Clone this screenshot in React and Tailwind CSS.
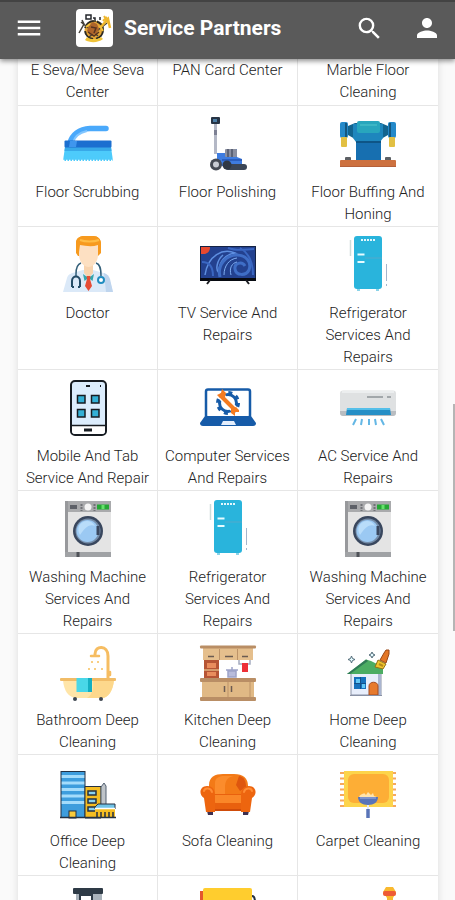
import React from 'react';
import { MdMenu, MdSearch, MdPerson } from 'react-icons/md';

const Icon = ({ children }) => (
    <svg viewBox="0 0 56 56" className="w-14 h-14 shrink-0 overflow-visible" fill="none" aria-hidden="true">
        {children}
    </svg>
);

const BrushIcon = () => (
    <Icon>
        <path d="M46 12.500H30C19 13 12 19 10 27" stroke="#4aa9fb" strokeWidth="5.500" strokeLinecap="round" />
        <path d="M27 15C18 17 14 22 13 27" stroke="#82c6ff" strokeWidth="2" />
        <path d="M5 31h46l2 14H3z" fill="#4dcbfb" />
        <path d="M5 31h46l.5 4h-47z" fill="#38a9e8" />
        <path d="M3 44.500h50" stroke="#fff" strokeWidth="1.500" strokeDasharray="1.500 1.500" />
        <rect x="4.500" y="24.500" width="47" height="7" rx="1" fill="#1c6fd0" />
        <path d="M10 25h7l-1 6h-7z" fill="#3f96ee" />
    </Icon>
);

const PolisherIcon = () => (
    <Icon>
        <path d="M15.500 7v31" stroke="#b4b8c6" strokeWidth="3" />
        <path d="M15.500 14v5" stroke="#7d8194" strokeWidth="3" />
        <rect x="11" y="1" width="9" height="7" rx="1" fill="#273445" />
        <rect x="13" y="3" width="4" height="3" fill="#4c7ea6" />
        <path d="M17 37h10v-4h10v8l5 2v7H17z" fill="#3e7ce0" />
        <rect x="25" y="33" width="12" height="8" rx="1" fill="#8a8fa0" />
        <path d="M28 33v8M32 33v8" stroke="#4e5668" strokeWidth="1.500" />
        <path d="M22 44h20" stroke="#2a5fc0" strokeWidth="2" />
        <rect x="25" y="48" width="22" height="6" rx="3" fill="#3b4656" />
        <circle cx="27" cy="49" r="4.500" fill="#2f3845" />
        <circle cx="16" cy="48.500" r="6" fill="#454a54" />
        <circle cx="16" cy="48.500" r="3" fill="#c9ccd4" />
    </Icon>
);

const BuffingIcon = () => (
    <Icon>
        <path d="M8 10l7-3h26l7 3v9l-7 4H15l-7-4z" fill="#12648f" />
        <rect x="0" y="6" width="8" height="16" rx="2" fill="#2489c9" />
        <rect x="48" y="6" width="8" height="16" rx="2" fill="#2489c9" />
        <path d="M6 7v14M50 7v14" stroke="#14577f" strokeWidth="2" />
        <rect x="1" y="21" width="6" height="10" rx="1" fill="#e2c043" />
        <rect x="49" y="21" width="6" height="10" rx="1" fill="#e2c043" />
        <rect x="16" y="24" width="25" height="20" fill="#176fb0" />
        <path d="M13 8h30v14l-3 4H16l-3-4z" fill="#1e86bd" />
        <rect x="17" y="5" width="23" height="12" rx="2" fill="#28a6bd" />
        <path d="M20 9h17" stroke="#51c6cc" strokeWidth="1" />
        <path d="M16 26h25" stroke="#0e5586" strokeWidth="2" />
        <rect x="5" y="41" width="6" height="4" rx="1" fill="#5c6065" />
        <rect x="45" y="41" width="6" height="4" rx="1" fill="#5c6065" />
        <rect x="0" y="44" width="56" height="7" rx="1" fill="#cd713f" />
        <path d="M0 50.500h56" stroke="#b5603a" strokeWidth="1" />
    </Icon>
);

const DoctorIcon = () => (
    <Icon>
        <path d="M3 55l4-14c1-4 5-5 9-6l7-2h10l7 2c4 1 8 2 9 6l4 14z" fill="#dbe9f8" />
        <path d="M44 36c3 1 5 3 6 6l3 13h-7z" fill="#bfd5ee" />
        <path d="M24 28h9v8l-4.500 5L24 36z" fill="#f8d3ae" />
        <path d="M16 16V6c0-5 4-7 8-7h9c5 0 8 3 8 8v9l-3 3H18z" fill="#f79a1e" />
        <path d="M19 7h19v11c0 7-5 12-9.500 12S19 25 19 18z" fill="#fde0c2" />
        <path d="M16 16V6c0-4 3-7 8-7h9c5 0 8 3 8 8v8l-3-1V8c-6 2-12 1-18 0l-1 7z" fill="#f79a1e" />
        <path d="M20 3c5 2 14 2 19 0" stroke="#ffbd45" strokeWidth="2" />
        <path d="M23 37l5.500 4-4 3zM34 37l-5.500 4 4 3z" fill="#35a6ad" />
        <path d="M26.500 39h4l-.5 3 2 7-3.500 5-3.500-5 2-7z" fill="#e64b35" />
        <path d="M21 26c-3 1-5 4-5 11v2M36 26c4 1 5 5 5 13" stroke="#335f79" strokeWidth="1.500" />
        <path d="M12 50V44c0-6 8-6 8 0v6M12 50h2M18 50h2" stroke="#234b66" strokeWidth="2" />
        <circle cx="41" cy="43" r="3" stroke="#218dc0" strokeWidth="2" fill="#fff" />
    </Icon>
);

const TvIcon = () => (
    <Icon>
        <rect x="0" y="9" width="56" height="35" fill="#142345" />
        <rect x="1" y="10" width="54" height="31" fill="#23418f" />
        <path d="M5 38c3-20 18-27 30-22-9 1-17 9-16 20-4-3-2-13 4-18" stroke="#5e8fe0" strokeWidth="1.500" />
        <path d="M20 40c-3-12 6-22 17-22 9 0 15 7 12 15-3 6-13 6-14-1-1-6 7-8 10-3" stroke="#3f6ec6" strokeWidth="3" />
        <path d="M28 11c8 3 17 2 26 1M2 25c8 0 11 6 11 14M40 11c9 5 13 14 13 27" stroke="#3a67c2" strokeWidth="2" />
        <path d="M24 38c0-9 5-16 13-17M31 38c-2-7 1-12 6-13" stroke="#7faef2" strokeWidth="1" />
        <path d="M1 10h9c0 4-2 6-5 7H1z" fill="#e8492f" />
        <path d="M0 42.500h56" stroke="#080b12" strokeWidth="3" />
        <path d="M10 43l-3 4M46 43l3 4" stroke="#1b1d22" strokeWidth="2" />
    </Icon>
);

const FridgeIcon = () => (
    <Icon>
        <path d="M17 51v3h3v-3zM36 51v3h3v-3z" fill="#8bd3e8" />
        <rect x="14" y="-1" width="28" height="53" rx="3" fill="#29b4dc" />
        <path d="M25 21h17" stroke="#55a9cb" strokeWidth="1" />
        <path d="M21 3h15" stroke="#e2f7fd" strokeWidth="2" strokeDasharray="2 1" />
        <path d="M17.500 17.500h7M17.500 25h7" stroke="#e6fbff" strokeWidth="2" />
        <path d="M10.500 3v16" stroke="#ccdbd8" strokeWidth="1.500" />
        <path d="M46.500 27v17M46.500 47v2" stroke="#a4b5cc" strokeWidth="1" />
    </Icon>
);

const MobileIcon = () => (
    <Icon>
        <rect x="11" y="1" width="35" height="54" rx="4" fill="#dcedfd" stroke="#171c22" strokeWidth="2" />
        <path d="M12 46h33v5c0 2-1 3-3 3H15c-2 0-3-1-3-3z" fill="#fff" />
        <path d="M11 45.500h35" stroke="#171c22" strokeWidth="1.500" />
        <path d="M26 6h4M40 6h1" stroke="#171c22" strokeWidth="2" />
        <g fill="#33b0d6" stroke="#171c22" strokeWidth="1.500">
            <rect x="17.500" y="15.500" width="7.500" height="7.500" />
            <rect x="31.500" y="15.500" width="7.500" height="7.500" />
            <rect x="17.500" y="29.500" width="7.500" height="7.500" />
            <rect x="31.500" y="29.500" width="7.500" height="7.500" />
        </g>
        <path d="M24 50h8" stroke="#171c22" strokeWidth="3" />
    </Icon>
);

const LaptopIcon = () => (
    <Icon>
        <rect x="6" y="9.500" width="44" height="28" rx="2" fill="#fff" stroke="#165ba8" strokeWidth="2.500" />
        <circle cx="28" cy="23" r="8.500" stroke="#165ba8" strokeWidth="3" />
        <circle cx="28" cy="23" r="10.500" stroke="#165ba8" strokeWidth="3" strokeDasharray="4 4.250" />
        <path d="M21 16l14 14" stroke="#fff" strokeWidth="7" />
        <path d="M21 16l14 14" stroke="#f47b20" strokeWidth="4" />
        <path d="M17 15l3 3 5-1 1-4-4-4-1 4zM39 30l-3-3-5 2v4l4 3v-4h4z" fill="#f47b20" />
        <path d="M5 36h46l5 7c0 2-1 3-3 3H3c-2 0-3-1-3-3z" fill="#165ba8" />
        <path d="M23 41h11l2 4H21z" fill="#e4eefc" />
    </Icon>
);

const AcIcon = () => (
    <Icon>
        <rect x="0" y="10.500" width="56" height="25" rx="3" fill="#dfe1e2" />
        <path d="M0 31h56v2c0 2-1 3-3 3H3c-2 0-3-1-3-3z" fill="#b9bdc1" />
        <path d="M2 12h52" stroke="#eceeef" strokeWidth="2" />
        <path d="M27 17h16M47 17h4" stroke="#8f9498" strokeWidth="1.500" />
        <path d="M7 28h43l1 7H6z" fill="#268fc6" />
        <path d="M7 29h43" stroke="#55bfe9" strokeWidth="2" />
        <path d="M16 39l-3 6M22 39l-1 6M29 39v6M35 39l1 6M41 39l3 6" stroke="#64b7e5" strokeWidth="2" />
    </Icon>
);

const WasherIcon = () => (
    <Icon>
        <rect x="5" y="0" width="46" height="56" rx="1" fill="#e4e4e4" />
        <rect x="5" y="0" width="46" height="11" fill="#a9aaac" />
        <path d="M6.500 0v56" stroke="#98999c" strokeWidth="3" />
        <rect x="10" y="4" width="7" height="4" fill="#5d6067" />
        <path d="M21.500 3v7M34.500 3v7" stroke="#707277" strokeWidth="2" strokeDasharray="2 1" />
        <circle cx="28" cy="6" r="3.500" fill="#f4f4f4" />
        <rect x="37" y="3.500" width="12" height="5" fill="#26a735" />
        <path d="M43 4v4" stroke="#65e26b" strokeWidth="3" />
        <circle cx="28" cy="30" r="15" fill="#39475e" />
        <circle cx="28" cy="30" r="12.500" fill="#758da9" />
        <circle cx="27.500" cy="30" r="11" fill="#9bc9f3" />
        <path d="M19 25c4-7 13-6 16 0-6-3-11 3-15 9-2-3-2-6-1-9" fill="#b9ddfa" />
        <path d="M36.500 25h3v9h-3z" fill="#39475e" />
        <rect x="5" y="51" width="46" height="5" fill="#a0a2a5" />
        <path d="M18 51v5" stroke="#4f5258" strokeWidth="3" />
    </Icon>
);

const BathIcon = () => (
    <Icon>
        <path d="M48 35V12c0-11-13-11-13-2v2" stroke="#f6bd62" strokeWidth="3" />
        <path d="M31 12h8M50 28v3" stroke="#f6bd62" strokeWidth="2.500" strokeLinecap="round" />
        <path d="M31 18h2M37 18h2M28 25h2M34 25h2M41 25h2" stroke="#f9cf83" strokeWidth="2" />
        <path d="M3 36h51c-1 11-6 18-12 18H16C8 53 4 47 3 36" fill="#ffe5a8" />
        <path d="M33 36h21c-1 11-6 18-12 18H27c6-4 7-10 6-18" fill="#fdd88c" />
        <rect x="0" y="34" width="56" height="3" rx="1" fill="#f1bc67" />
        <rect x="16.500" y="34" width="12" height="14" fill="#49d7e8" />
        <rect x="28" y="34" width="4" height="14" fill="#14afc2" />
        <circle cx="15" cy="55" r="2" fill="#3e4650" />
        <circle cx="41" cy="55" r="2" fill="#3e4650" />
    </Icon>
);

const KitchenIcon = () => (
    <Icon>
        <rect x="3" y="4" width="50" height="12" fill="#e5bf8d" />
        <rect x="0" y="1.500" width="56" height="3" rx="1" fill="#b98e65" />
        <path d="M19.500 5v11M37.500 5v11" stroke="#bd9368" strokeWidth="1" />
        <path d="M8 12.500h6M25 12.500h8M42 12.500h6" stroke="#6b5b52" strokeWidth="1.500" />
        <rect x="4" y="16" width="15" height="18" fill="#b65535" />
        <path d="M7 19h9v5H7zM7 28h9v4H7z" fill="#e98d5d" />
        <path d="M4 26h15" stroke="#e0b37f" strokeWidth="1.500" />
        <path d="M39 16v4h11v-4" stroke="#a5acc0" strokeWidth="1.500" />
        <rect x="42" y="19" width="6" height="9" fill="#ed3038" />
        <path d="M26 26h12M28 27h8v6h-8zM32 23v3" fill="#b8bcdb" stroke="#9da3c8" strokeWidth="1.500" />
        <rect x="2" y="36" width="52" height="18" fill="#e0b985" />
        <rect x="0" y="34" width="56" height="4" rx="1" fill="#b98e65" />
        <rect x="0" y="53" width="56" height="4" rx="1" fill="#b98e65" />
        <path d="M28 38v15M50 38v15" stroke="#bd9368" strokeWidth="1" />
        <path d="M24.500 42v6M31.500 42v6" stroke="#6b5b52" strokeWidth="1.500" />
    </Icon>
);

const HomeIcon = () => (
    <Icon>
        <path d="M11 28h30v23H11z" fill="#e8eefb" stroke="#8991a5" strokeWidth="1" />
        <path d="M38 29h3v22h-3z" fill="#aab5d0" />
        <path d="M26 15.500L7 30h36V23L31 17z" fill="#4cad63" />
        <path d="M26 15.500L7 30h3l18-13z" fill="#317b57" />
        <rect x="14" y="33" width="12" height="12" fill="#1671bc" />
        <path d="M16 35h4v4h-4zM22 40h3v4h-3z" fill="#62c7f5" />
        <path d="M20.500 33v12M14 39.500h12" stroke="#134f87" strokeWidth="1" />
        <path d="M29 51V42c0-5 9-5 9 0v9z" fill="#e77a2d" stroke="#a34c25" strokeWidth="1" />
        <path d="M10 51.500h32" stroke="#8991a5" strokeWidth="1" />
        <path d="M46 6h3v4l-3 9-6-3 4-7z" fill="#e37626" stroke="#994616" strokeWidth="1" />
        <path d="M38 16l8 4-3 5-8-2z" fill="#f1c42c" stroke="#937117" strokeWidth="1" />
        <path d="M39 20l4 2" stroke="#b68b18" strokeWidth="2" />
        <path d="M11.500 12l1 2.500 2.500 1-2.500 1-1 2.500-1-2.500-2.500-1 2.500-1zM32 8l1 2 2 1-2 1-1 2-1-2-2-1 2-1z" stroke="#526b78" strokeWidth="1" fill="#e5fbff" />
    </Icon>
);

const OfficeIcon = () => (
    <Icon>
        <rect x="1" y="7" width="24" height="46" fill="#3d9ddd" />
        <path d="M1 11.500h24M1 18h24M1 24.500h24M1 31h24M1 37.500h24" stroke="#a4dcfb" strokeWidth="3" />
        <rect x="1" y="6.500" width="24" height="46" stroke="#243142" strokeWidth="1" />
        <path d="M25 21.500h16V53H25z" fill="#f5bd22" stroke="#243142" strokeWidth="1" />
        <path d="M28 26h8v4h-8zM28 34h8v4h-8zM28 42h8v4h-8z" fill="#8bd2ee" stroke="#243142" strokeWidth="1.500" />
        <path d="M41 53V22l3-4 2 3v20" fill="#bfc4c9" stroke="#526071" strokeWidth="1" />
        <path d="M35 42l3-3h17v5H35z" fill="#71c4e7" stroke="#243142" strokeWidth="1" />
        <rect x="35" y="44" width="20" height="8.500" fill="#f5bd22" />
        <path d="M37 53v-6M41 53v-6M45 53v-6M49 53v-6M53 53v-6" stroke="#243142" strokeWidth="1.500" />
        <path d="M35 43.500h20" stroke="#fff" strokeWidth="1.500" />
        <rect x="9" y="46" width="7" height="7" fill="#f8cb3c" stroke="#243142" strokeWidth="1" />
        <path d="M0 52.500h56" stroke="#243142" strokeWidth="1.500" />
    </Icon>
);

const SofaIcon = () => (
    <Icon>
        <path d="M7 46h6v4H8zM43 46h6l-1 4h-5z" fill="#3d3050" />
        <path d="M9 30V20c0-8 6-11 14-11h11c9 0 14 4 14 12v9z" fill="#f37a17" />
        <path d="M15 29V18c0-5 4-7 9-7h10c-7 1-9 5-9 12v6z" fill="#fb8c2c" />
        <path d="M39 11c5 1 7 5 7 11l-6 4-4-6z" fill="#de560e" />
        <path d="M12 29h33v17H12z" fill="#e9610e" />
        <path d="M13 30h31c2 0 3 8-2 8H16c-4 0-5-8-3-8" fill="#fa8728" />
        <path d="M7 21c7 0 8 5 8 11v15H6l-2-14c-6-4-4-12 3-12M49 21c-7 0-8 5-8 11v15h9l2-14c6-4 4-12-3-12" fill="#ed650f" />
        <path d="M4 26c1-4 7-3 8 1M52 26c-1-4-7-3-8 1" stroke="#ff8d35" strokeWidth="2" strokeLinecap="round" />
        <path d="M15 45h26" stroke="#cf4c0a" strokeWidth="2" />
    </Icon>
);

const CarpetIcon = () => (
    <Icon>
        <path d="M2 7v35M54 7v35" stroke="#f6a75d" strokeWidth="4" strokeDasharray="2 3.500" />
        <rect x="4" y="6" width="49" height="36" fill="#fdd44b" />
        <rect x="8" y="9" width="41" height="29" rx="6" fill="#fdae36" />
        <path d="M19 32c2-4 4-2 5-4l2 2 2-3 3 3 2-2 1 3 3 1z" fill="#ffe3ac" />
        <path d="M18 32h20c0 5-4 8-10 8s-10-3-10-8" fill="#5974b8" />
        <path d="M20 33h16" stroke="#7e93cc" strokeWidth="2" />
        <path d="M28 40v4" stroke="#e6eaf7" strokeWidth="2" />
        <path d="M28 44v9" stroke="#5974b8" strokeWidth="3.500" />
    </Icon>
);

const MachineIcon = () => (
    <Icon>
        <rect x="13" y="2" width="30" height="6" rx="1" fill="#2e3a46" />
        <path d="M16 8h26v24H16z" fill="#a9b2bb" />
        <path d="M20 9h12v20H20z" fill="#fff" stroke="#2e3a46" strokeWidth="2" />
    </Icon>
);

const MattressIcon = () => (
    <Icon>
        <rect x="0" y="5" width="8" height="30" fill="#e4572e" />
        <rect x="3" y="2" width="49" height="32" rx="2" fill="#ffcd2e" />
        <path d="M52 10c2 0 3 2 3 6" stroke="#263140" strokeWidth="2" />
    </Icon>
);

const DusterIcon = () => (
    <Icon>
        <path d="M46 1h7l3 5-3 6v14h-6V12l-4-6z" fill="#f9b92f" />
        <rect x="43" y="5" width="13" height="5" rx="2" fill="#ee5b35" />
    </Icon>
);

const Logo = () => (
    <svg viewBox="0 0 37 38" className="w-[37px] h-[38px] shrink-0" fill="none" aria-label="Service Partners logo">
        <rect width="37" height="38" rx="4" fill="#fff" />
        <circle cx="18" cy="21" r="9.500" fill="#e4a536" />
        <circle cx="18" cy="21" r="9" stroke="#2c2923" strokeWidth="2" strokeDasharray="12 3" />
        <path d="M9 31c5 3 13 3 18-1l-2-2c-4 3-10 3-14 0z" fill="#f0c338" />
        <path d="M3 24l5-9-2-4M5 13l17 14M31 14l-18 14" stroke="#45413b" strokeWidth="1.500" />
        <path d="M24 19l8-9 2 9" stroke="#efb72d" strokeWidth="2.500" />
        <path d="M28 7l5 8M27 12l4-4" stroke="#efb72d" strokeWidth="2" />
        <path d="M10 6h5v4h-5zM17 9h2v4M24 8v3" stroke="#24272c" strokeWidth="1.500" />
        <path d="M13 16l4-3 4 2 2 5-3 5-6 1-3-4z" fill="#ad642b" />
        <path d="M15 18l5 1-2 5M12 23l6 4 5-4" stroke="#563220" strokeWidth="1.500" />
        <path d="M10 18l4-3M24 17l3 5" stroke="#f4c13b" strokeWidth="2" />
    </svg>
);

// first row is the tail of the cards already scrolled under the header
const scrolledServices = ['E Seva/Mee Seva Center', 'PAN Card Center', 'Marble Floor Cleaning'];

const services = [
    { name: 'Floor Scrubbing', icon: BrushIcon },
    { name: 'Floor Polishing', icon: PolisherIcon },
    { name: 'Floor Buffing And Honing', icon: BuffingIcon },
    { name: 'Doctor', icon: DoctorIcon },
    { name: 'TV Service And Repairs', icon: TvIcon },
    { name: 'Refrigerator Services And Repairs', icon: FridgeIcon },
    { name: 'Mobile And Tab Service And Repair', icon: MobileIcon },
    { name: 'Computer Services And Repairs', icon: LaptopIcon },
    { name: 'AC Service And Repairs', icon: AcIcon },
    { name: 'Washing Machine Services And Repairs', icon: WasherIcon },
    { name: 'Refrigerator Services And Repairs', icon: FridgeIcon },
    { name: 'Washing Machine Services And Repairs', icon: WasherIcon },
    { name: 'Bathroom Deep Cleaning', icon: BathIcon },
    { name: 'Kitchen Deep Cleaning', icon: KitchenIcon },
    { name: 'Home Deep Cleaning', icon: HomeIcon },
    { name: 'Office Deep Cleaning', icon: OfficeIcon },
    { name: 'Sofa Cleaning', icon: SofaIcon },
    { name: 'Carpet Cleaning', icon: CarpetIcon },
    { name: '', icon: MachineIcon },
    { name: '', icon: MattressIcon },
    { name: '', icon: DusterIcon }
];

const cellClass = 'flex flex-col items-center border-b border-r border-[#e6e6e6] nth-[3n]:border-r-0 px-1 text-center text-[15px] leading-[22px] font-light text-[#222]';

const App = () => {
    return (
        <div className="flex h-screen flex-col overflow-hidden bg-[#fafafa] font-['Roboto',sans-serif]">

            {/* ---------- HEADER ---------- */}
            <header className="relative z-10 flex shrink-0 items-center border-t-2 border-[#434343] bg-[#5a5a5a] pt-[7px] pb-3 pl-3.5 pr-[13px] text-white shadow-[0_2px_5px_rgba(0,0,0,0.45)]">
                <button type="button" aria-label="Menu" className="mr-8">
                    <MdMenu size={30} />
                </button>
                <Logo />
                <h1 className="ml-[11px] flex-1 text-[21px] leading-7 font-bold">Service Partners</h1>
                <button type="button" aria-label="Search" className="mr-7">
                    <MdSearch size={29} />
                </button>
                <button type="button" aria-label="Account">
                    <MdPerson size={30} />
                </button>
            </header>

            {/* ---------- SERVICES ---------- */}
            <main className="relative min-h-0 flex-1 overflow-hidden">
                <div className="ml-[18px] mr-[17px] grid grid-cols-3 bg-white shadow-[0_0_8px_rgba(0,0,0,0.12)]">
                    {scrolledServices.map((name) => (
                        <a key={name} href="#service" className={`${cellClass} pb-0.5`}>{name}</a>
                    ))}
                    {services.map(({ name, icon: ServiceIcon }, index) => (
                        <a key={index} href="#service" className={`${cellClass} pt-2.5 pb-px`}>
                            <ServiceIcon />
                            <span className="mt-[9px]">{name}</span>
                        </a>
                    ))}
                </div>

                {/* scroll position marker */}
                <div className="absolute right-0 top-[41%] h-[27%] w-0.5 bg-[#b5b5b5]" />
            </main>
        </div>
    );
};

export default App;
